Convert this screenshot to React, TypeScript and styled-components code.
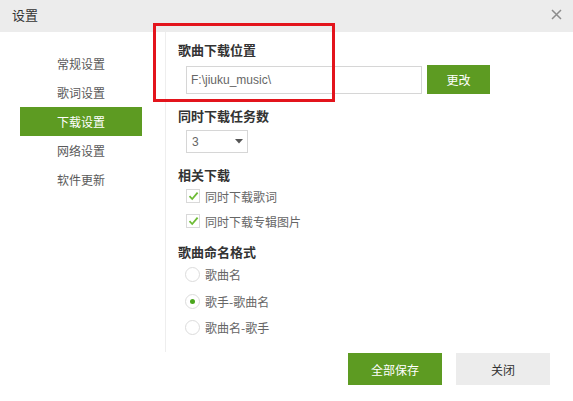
import React from "react";
import styled, { createGlobalStyle } from "styled-components";

const Global = createGlobalStyle`
  html, body { margin: 0; padding: 0; background: #fff; }
  body { font-family: "Microsoft YaHei", "Noto Sans CJK SC", "Noto Sans", sans-serif; }
  * { box-sizing: border-box; }
`;

const GREEN = "#5d9b22";

const Window = styled.div`
  position: relative;
  width: 573px;
  height: 401px;
  background: #fff;
  color: #333;
  overflow: hidden;
`;

const TitleBar = styled.div`
  height: 32px;
  background: #ececec;
  display: flex;
  align-items: center;
  justify-content: space-between;
  padding: 0 11px 0 12px;
`;

const Title = styled.span`
  font-size: 13px;
  color: #333;
  line-height: 1;
  margin-top: -3px;
`;

const CloseBtn = styled.button`
  border: none;
  background: none;
  padding: 0;
  width: 11px;
  height: 11px;
  display: flex;
  margin-top: -4px;
  cursor: pointer;
`;

const Body = styled.div`
  display: flex;
  height: 320px;
`;

const Sidebar = styled.nav`
  width: 166px;
  border-right: 1px solid #eeeeee;
  padding: 17px 0 0 20px;
  display: flex;
  flex-direction: column;
`;

const NavItem = styled.div<{ $active?: boolean }>`
  width: 122px;
  height: 29px;
  display: flex;
  align-items: center;
  justify-content: center;
  font-size: 12px;
  color: ${(p) => (p.$active ? "#fff" : "#5a5a5a")};
  background: ${(p) => (p.$active ? GREEN : "transparent")};
`;

const Content = styled.div`
  flex: 1;
  padding: 9px 0 0 12px;
  display: flex;
  flex-direction: column;
`;

const Heading = styled.div<{ $mt?: number }>`
  font-size: 13px;
  font-weight: bold;
  line-height: 18px;
  color: #333;
  margin-top: ${(p) => p.$mt ?? 0}px;
`;

const Row = styled.div<{ $mt?: number }>`
  display: flex;
  align-items: center;
  margin-left: 8px;
  margin-top: ${(p) => p.$mt ?? 0}px;
`;

const PathInput = styled.div`
  width: 236px;
  height: 28px;
  border: 1px solid #d6d6d6;
  display: flex;
  align-items: center;
  padding-left: 4px;
  font-family: "Liberation Sans", "Noto Sans CJK SC", sans-serif;
  font-size: 12px;
  color: #666;
`;

const ChangeBtn = styled.button`
  width: 63px;
  height: 29px;
  margin-left: 5px;
  border: none;
  background: ${GREEN};
  color: #fff;
  font-family: inherit;
  font-size: 12px;
`;

const Select = styled.div`
  width: 62px;
  height: 23px;
  border: 1px solid #d6d6d6;
  display: flex;
  align-items: center;
  justify-content: space-between;
  padding: 0 4px 0 5px;
  font-family: "Liberation Sans", sans-serif;
  font-size: 12px;
  color: #666;
`;

const OptionRow = styled.label<{ $mt?: number }>`
  display: flex;
  align-items: center;
  gap: 5px;
  height: 16px;
  margin-left: 8px;
  margin-top: ${(p) => p.$mt ?? 0}px;
  font-size: 12px;
  color: #666;
`;

const CheckBox = styled.span`
  width: 14px;
  height: 14px;
  border: 1px solid #d9d9d9;
  display: flex;
  align-items: center;
  justify-content: center;
  background: #fff;
`;

const Radio = styled.span<{ $checked?: boolean }>`
  width: 15px;
  height: 15px;
  border-radius: 50%;
  border: 1px solid #dcdcdc;
  display: flex;
  align-items: center;
  justify-content: center;
  margin-left: -1px;
  &::after {
    content: "";
    width: 5px;
    height: 5px;
    border-radius: 50%;
    background: ${(p) => (p.$checked ? "#4aa61c" : "transparent")};
  }
`;

const Footer = styled.div`
  display: flex;
  justify-content: flex-end;
  gap: 14px;
  padding: 1px 23px 0 0;
`;

const FooterBtn = styled.button<{ $primary?: boolean }>`
  width: 94px;
  height: 32px;
  border: none;
  font-family: inherit;
  font-size: 12px;
  background: ${(p) => (p.$primary ? GREEN : "#ececec")};
  color: ${(p) => (p.$primary ? "#fff" : "#333")};
`;

const Highlight = styled.div`
  position: absolute;
  left: 153px;
  top: 23px;
  width: 182px;
  height: 79px;
  border: 3px solid #e3141c;
  pointer-events: none;
`;

const Check = () => (
  <svg width="11" height="10" viewBox="0 0 11 10">
    <path d="M1.5 5.2 L4.2 8 L9.6 1.6" fill="none" stroke="#6dbb35" strokeWidth="1.8" />
  </svg>
);

export default function App() {
  return (
    <Window>
      <Global />
      <TitleBar>
        <Title>设置</Title>
        <CloseBtn aria-label="close">
          <svg width="11" height="11" viewBox="0 0 11 11">
            <path d="M1 1 L10 10 M10 1 L1 10" stroke="#8c8c8c" strokeWidth="1.5" />
          </svg>
        </CloseBtn>
      </TitleBar>
      <Body>
        <Sidebar>
          <NavItem>常规设置</NavItem>
          <NavItem>歌词设置</NavItem>
          <NavItem $active>下载设置</NavItem>
          <NavItem>网络设置</NavItem>
          <NavItem>软件更新</NavItem>
        </Sidebar>
        <Content>
          <Heading>歌曲下载位置</Heading>
          <Row $mt={6}>
            <PathInput>F:\jiuku_music\</PathInput>
            <ChangeBtn>更改</ChangeBtn>
          </Row>
          <Heading $mt={13}>同时下载任务数</Heading>
          <Row $mt={5}>
            <Select>
              <span>3</span>
              <svg width="8" height="5" viewBox="0 0 8 5">
                <path d="M0 0 H8 L4 4.5 Z" fill="#555" />
              </svg>
            </Select>
          </Row>
          <Heading $mt={13}>相关下载</Heading>
          <OptionRow $mt={4}>
            <CheckBox><Check /></CheckBox>
            同时下载歌词
          </OptionRow>
          <OptionRow $mt={9}>
            <CheckBox><Check /></CheckBox>
            同时下载专辑图片
          </OptionRow>
          <Heading $mt={14}>歌曲命名格式</Heading>
          <OptionRow $mt={5}>
            <Radio />
            歌曲名
          </OptionRow>
          <OptionRow $mt={11}>
            <Radio $checked />
            歌手-歌曲名
          </OptionRow>
          <OptionRow $mt={10}>
            <Radio />
            歌曲名-歌手
          </OptionRow>
        </Content>
      </Body>
      <Footer>
        <FooterBtn $primary>全部保存</FooterBtn>
        <FooterBtn>关闭</FooterBtn>
      </Footer>
      <Highlight />
    </Window>
  );
}
